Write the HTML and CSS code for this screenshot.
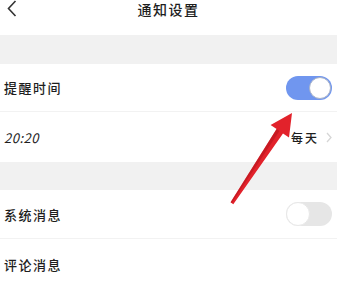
FILE: index.html
```html
<!DOCTYPE html>
<html lang="zh">
<head>
<meta charset="utf-8">
<link rel="stylesheet" href="styles.css">
</head>
<body>
<div class="page">
  <header class="header">
    <svg class="back" width="10" height="17" viewBox="0 0 10 17"><path d="M8.5 1 L1.5 8.5 L8.5 16" fill="none" stroke="#333" stroke-width="1.6"/></svg>
    <div class="title">通知设置</div>
  </header>
  <div class="band band-top"></div>
  <div class="row row-1">
    <span class="label">提醒时间</span>
    <span class="toggle on"><span class="knob"></span></span>
  </div>
  <div class="row row-2 last">
    <span class="label time">20:20</span>
    <span class="value">每天<svg class="chev" width="6" height="11" viewBox="0 0 6 11"><path d="M1 1 L5 5.5 L1 10" fill="none" stroke="#d6d6d6" stroke-width="1.3"/></svg></span>
  </div>
  <div class="band band-mid"></div>
  <div class="row row-3">
    <span class="label">系统消息</span>
    <span class="toggle off"><span class="knob"></span></span>
  </div>
  <div class="row row-4 last">
    <span class="label">评论消息</span>
  </div>
  <svg class="arrow" width="337" height="283" viewBox="0 0 337 283">
    <polygon points="230.6,202.2 233.3,204.2 283.0,133.5 289.0,137.5 292,113 270.6,125.0 276.6,129.0" fill="#e2222b"/>
    <polygon points="230.6,202.2 231.8,203.1 279.5,131.0 276.6,129.0" fill="#b8141c" opacity="0.6"/>
  </svg>
</div>
</body>
</html>
```
FILE: styles.css
```css
html, body {
  margin: 0;
  padding: 0;
  background: #fff;
}
.page {
  position: relative;
  width: 337px;
  height: 283px;
  overflow: hidden;
  font-family: "Noto Sans CJK SC", "Noto Sans", sans-serif;
  color: #1e1e1e;
}
.header {
  height: 35px;
  display: flex;
  justify-content: center;
  position: relative;
}
.back {
  position: absolute;
  left: 7px;
  top: 0;
}
.title {
  font-size: 14px;
  font-weight: 500;
  letter-spacing: 1.5px;
  line-height: 18px;
  margin-top: 0;
}
.band {
  background: #f1f1f1;
}
.band-top { height: 29px; }
.band-mid { height: 28px; }
.row {
  display: flex;
  align-items: center;
  justify-content: space-between;
  padding: 0 5px 0 4px;
  border-bottom: 1px solid #f2f2f2;
}
.row.last { border-bottom: none; }
.row-1 { height: 47px; }
.row-2 { height: 50px; }
.row-3 { height: 48px; }
.row-4 { height: 50px; }
.label {
  font-size: 13px;
  font-weight: 500;
  letter-spacing: 1.5px;
}
.time {
  letter-spacing: 0.5px;
  font-style: italic;
  font-weight: 400;
}
.value {
  display: flex;
  align-items: center;
  gap: 7px;
  font-size: 12px;
  font-weight: 500;
  letter-spacing: 2px;
}
.toggle {
  width: 46px;
  height: 24px;
  border-radius: 12px;
  position: relative;
  box-sizing: border-box;
}
.toggle.on { background: #7096ef; }
.toggle.off { background: #e6e6e6; }
.knob {
  position: absolute;
  top: 1px;
  width: 22px;
  height: 22px;
  border-radius: 50%;
  background: #fff;
  box-sizing: border-box;
}
.toggle.on .knob { right: 1px; border: 1.5px solid #a9b3c8; }
.toggle.off .knob { left: 0; top: 0; width: 24px; height: 24px; border: 1px solid #e8e8e8; }
.arrow {
  position: absolute;
  left: 0;
  top: 0;
  pointer-events: none;
}
```
